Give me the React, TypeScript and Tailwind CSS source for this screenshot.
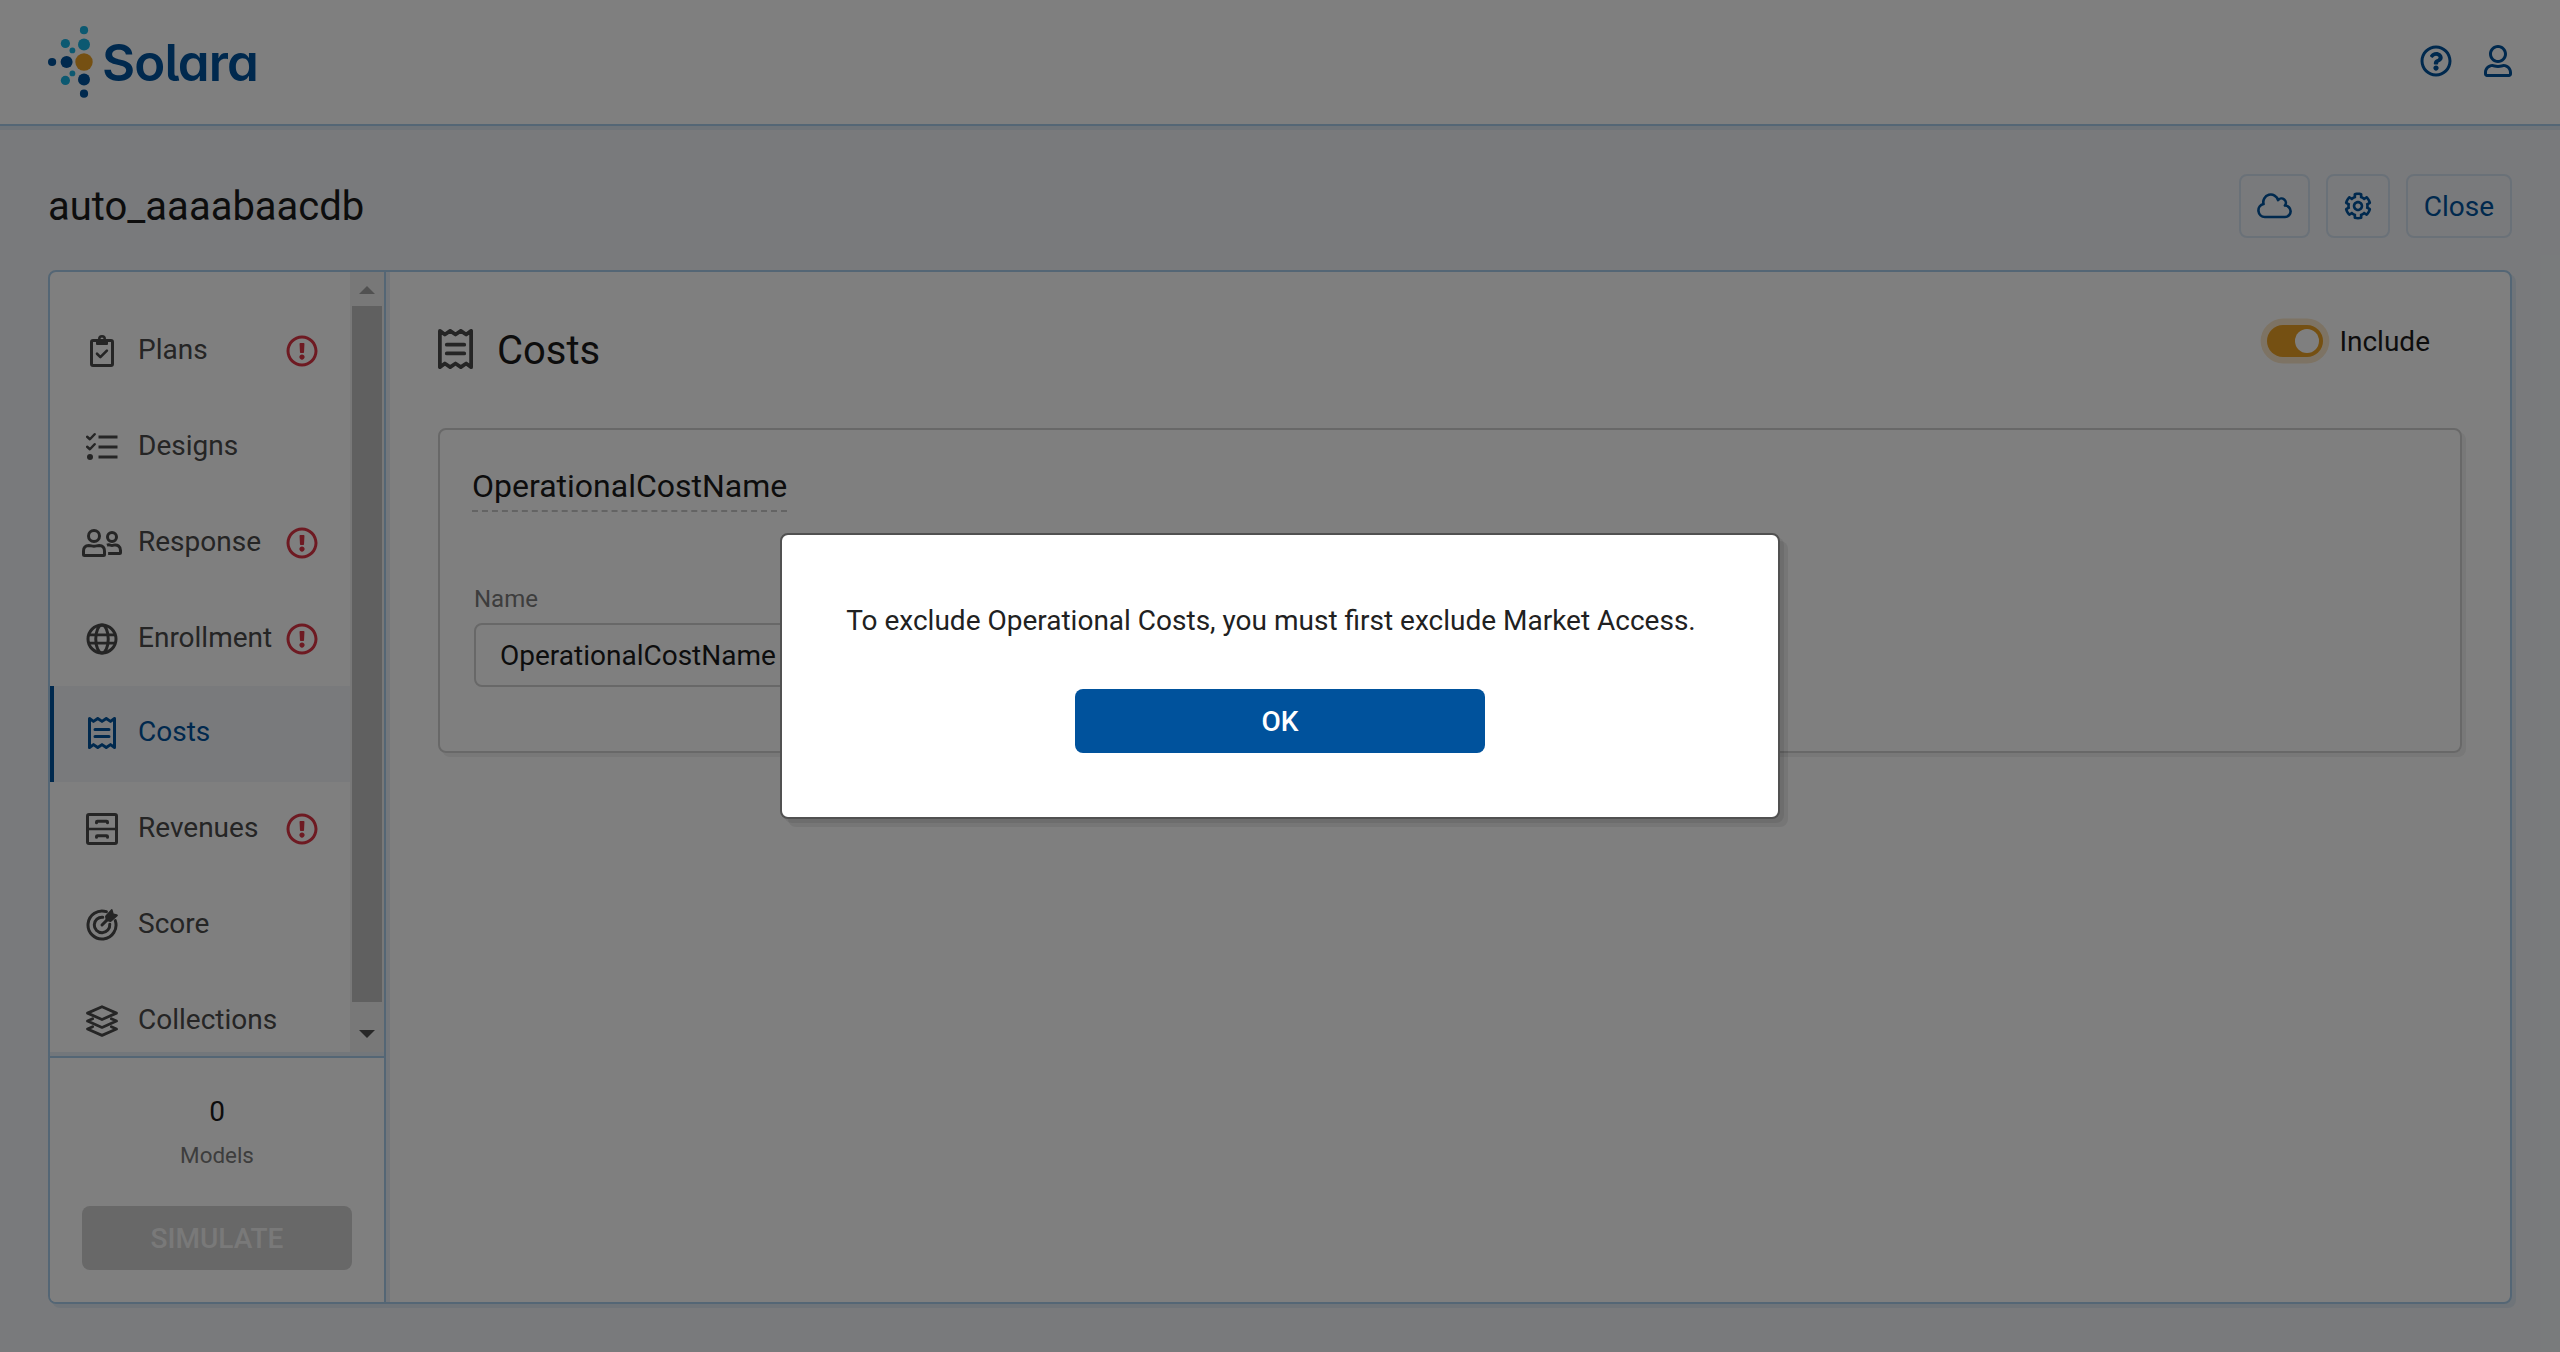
import type { ReactNode } from "react";
import { FaRegQuestionCircle, FaRegUser } from "react-icons/fa";

type IconProps = { className?: string };

function Icon({ w = 512, className = "", children }: { w?: number; className?: string; children: ReactNode }) {
  return (
    <svg
      viewBox={`0 0 ${w} 512`}
      className={className}
      fill="none"
      stroke="currentColor"
      strokeWidth={48}
      strokeLinejoin="round"
      strokeLinecap="round"
    >
      {children}
    </svg>
  );
}

const PlansIcon = ({ className }: IconProps) => (
  <Icon w={384} className={className}>
    <rect x="24" y="88" width="336" height="400" rx="24" />
    <path
      d="M192 0a64 64 0 0 1 64 64h16a16 16 0 0 1 16 16v64a16 16 0 0 1-16 16H112a16 16 0 0 1-16-16V80a16 16 0 0 1 16-16h16a64 64 0 0 1 64-64zm0 40a24 24 0 1 0 0 48 24 24 0 0 0 0-48z"
      fill="currentColor"
      stroke="none"
    />
    <path d="M112 300l54 54 104-104" strokeWidth="42" />
  </Icon>
);

const DesignsIcon = ({ className }: IconProps) => (
  <Icon className={className}>
    <path d="M200 96h304M200 256h304M200 416h304" strokeWidth="46" strokeLinecap="butt" />
    <path d="M18 92l44 40 76-80M18 252l44 40 76-80" strokeWidth="40" />
    <circle cx="64" cy="416" r="48" fill="currentColor" stroke="none" />
  </Icon>
);

const ResponseIcon = ({ className }: IconProps) => (
  <Icon w={640} className={className}>
    <circle cx="192" cy="144" r="88" />
    <path d="M110 296c30 0 50 12 82 12s52-12 82-12q86 4 86 89v55q0 16-16 16H40q-16 0-16-16v-55q0-85 86-89z" />
    <circle cx="480" cy="160" r="72" />
    <path d="M400 292c14-6 40-8 52-2 20 6 36 6 56 0 60-14 108 24 108 84v34q0 16-16 16H418" strokeLinecap="butt" />
  </Icon>
);

const EnrollmentIcon = ({ className }: IconProps) => (
  <Icon className={className}>
    <circle cx="256" cy="256" r="224" />
    <ellipse cx="256" cy="256" rx="100" ry="224" />
    <path d="M40 190h432M40 322h432" strokeLinecap="butt" strokeWidth="44" />
  </Icon>
);

const CostsIcon = ({ className }: IconProps) => (
  <Icon w={448} className={className}>
    <path d="M24 24l64 46 68-46 68 46 68-46 68 46 64-46v464l-64-46-68 46-68-46-68 46-68-46-64 46z" />
    <path d="M112 200h224M112 312h224" />
  </Icon>
);

const RevenuesIcon = ({ className }: IconProps) => (
  <Icon className={className}>
    <rect x="24" y="24" width="464" height="464" rx="24" />
    <path d="M24 256h464" strokeWidth="42" />
    <path d="M168 156v-12q0-14 14-14h148q14 0 14 14v12M168 388v-12q0-14 14-14h148q14 0 14 14v12" />
  </Icon>
);

const ScoreIcon = ({ className }: IconProps) => (
  <Icon className={className}>
    <path d="M326 43A224 224 0 1 0 469 186" />
    <path d="M268 132A124 124 0 1 0 380 244" />
    <path d="M256 256l110-110" />
    <path
      d="M318 188l-12-62a24 24 0 0 1 6-22l84-94c12-14 28-10 32 8l14 52 52 14c18 4 22 20 8 32l-94 84a24 24 0 0 1-22 6z"
      fill="currentColor"
      stroke="none"
    />
  </Icon>
);

const CollectionsIcon = ({ className }: IconProps) => (
  <Icon className={className}>
    <path d="M24 130L256 28l232 102-232 102zM106 220l-82 37 232 102 232-102-82-37M106 347l-82 37 232 102 232-102-82-37" strokeWidth="44" />
  </Icon>
);

const CloudIcon = ({ className }: IconProps) => (
  <Icon w={640} className={className}>
    <path d="M144 456a120 120 0 0 1-24-237A136 136 0 0 1 385 148 72 72 0 0 1 510 248 104 104 0 0 1 512 456z" />
  </Icon>
);

const GearIcon = ({ className }: IconProps) => (
  <svg viewBox="0 0 512 512" className={className} fill="currentColor">
    <path d="M452.515 237l31.843-18.382c9.426-5.441 13.996-16.542 11.177-27.054-11.404-42.531-33.842-80.547-64.058-110.797-7.68-7.688-19.575-9.246-28.985-3.811l-31.785 18.358a196.276 196.276 0 0 0-32.899-19.02V39.541a24.016 24.016 0 0 0-17.842-23.206c-41.761-11.107-86.117-11.121-127.93-.001-10.519 2.798-17.844 12.321-17.844 23.206v36.753a196.276 196.276 0 0 0-32.899 19.02l-31.784-18.358c-9.41-5.435-21.305-3.877-28.985 3.811-30.216 30.25-52.654 68.265-64.058 110.797-2.819 10.512 1.751 21.613 11.177 27.054L59.485 237a197.715 197.715 0 0 0 0 37.999l-31.843 18.382c-9.426 5.441-13.996 16.542-11.177 27.054 11.404 42.531 33.842 80.547 64.058 110.797 7.68 7.688 19.575 9.246 28.985 3.811l31.785-18.358a196.202 196.202 0 0 0 32.899 19.019v36.753a24.016 24.016 0 0 0 17.842 23.206c41.761 11.107 86.117 11.122 127.93.001 10.519-2.798 17.844-12.321 17.844-23.206v-36.753a196.34 196.34 0 0 0 32.899-19.019l31.785 18.358c9.41 5.435 21.305 3.877 28.985-3.811 30.216-30.25 52.654-68.266 64.058-110.797 2.819-10.512-1.751-21.613-11.177-27.054L452.515 275c1.22-12.65 1.22-25.35 0-38zm-52.679 63.019l43.819 25.289a200.138 200.138 0 0 1-33.849 58.528l-43.829-25.309c-31.984 27.397-36.659 30.077-76.168 44.029v50.599a200.917 200.917 0 0 1-67.618 0v-50.599c-39.504-13.95-44.196-16.642-76.168-44.029l-43.829 25.309a200.15 200.15 0 0 1-33.849-58.528l43.819-25.289c-7.63-41.299-7.634-46.719 0-88.038l-43.819-25.289c7.85-21.229 19.31-41.049 33.849-58.529l43.829 25.309c31.984-27.397 36.66-30.078 76.168-44.029V58.845a200.917 200.917 0 0 1 67.618 0v50.599c39.504 13.95 44.196 16.642 76.168 44.029l43.829-25.309a200.143 200.143 0 0 1 33.849 58.529l-43.819 25.289c7.631 41.3 7.634 46.718 0 88.037zM256 160c-52.935 0-96 43.065-96 96s43.065 96 96 96 96-43.065 96-96-43.065-96-96-96zm0 144c-26.468 0-48-21.532-48-48 0-26.467 21.532-48 48-48s48 21.533 48 48c0 26.468-21.532 48-48 48z" />
  </svg>
);

const AlertIcon = ({ className }: IconProps) => (
  <svg viewBox="0 0 512 512" className={className} fill="currentColor">
    <path d="M256 8C119.043 8 8 119.083 8 256c0 136.997 111.043 248 248 248s248-111.003 248-248C504 119.083 392.957 8 256 8zm0 448c-110.532 0-200-89.431-200-200 0-110.495 89.472-200 200-200 110.491 0 200 89.471 200 200 0 110.53-89.431 200-200 200zm42-104c0 23.159-18.841 42-42 42s-42-18.841-42-42 18.841-42 42-42 42 18.841 42 42zm-81.37-211.401l6.8 136c.319 6.387 5.591 11.401 11.985 11.401h41.17c6.394 0 11.666-5.014 11.985-11.401l6.8-136c.343-6.854-5.122-12.599-11.985-12.599h-54.77c-6.863 0-12.328 5.745-11.985 12.599z" />
  </svg>
);

function Logo() {
  return (
    <div className="flex h-[72px] items-start">
      <svg viewBox="0 0 45 72" className="h-[72px] w-[45px]">
        <g fill="#18b2e2">
          <circle cx="36" cy="4.2" r="4.1" />
          <circle cx="17.4" cy="17.5" r="4.6" />
          <circle cx="36" cy="18.5" r="6" />
          <circle cx="24.4" cy="24.4" r="2.9" />
          <circle cx="24.4" cy="47.4" r="2.9" />
          <circle cx="17.4" cy="54.4" r="4.6" />
        </g>
        <g fill="#00529c">
          <circle cx="4.1" cy="36" r="4.1" />
          <circle cx="18.6" cy="36" r="6" />
          <circle cx="36" cy="53.5" r="6" />
          <circle cx="36" cy="67.7" r="4.1" />
        </g>
        <circle cx="36" cy="36" r="8.7" fill="#eba024" />
      </svg>
      <span className="ml-[9px] mt-[11px] font-[Inter,sans-serif] text-[51px] leading-[51px] font-semibold tracking-[-0.9px] text-[#00529c] [font-feature-settings:'cv11','cv05']">
        Solara
      </span>
    </div>
  );
}

type NavItem = { label: string; icon: (p: IconProps) => ReactNode; size: string; alert?: boolean; active?: boolean; row: string };

const navItems: NavItem[] = [
  { label: "Plans", icon: PlansIcon, size: "w-6", alert: true, row: "h-24 pt-8" },
  { label: "Designs", icon: DesignsIcon, size: "w-8", row: "h-24 pt-8" },
  { label: "Response", icon: ResponseIcon, size: "w-10", alert: true, row: "h-24 pt-8" },
  { label: "Enrollment", icon: EnrollmentIcon, size: "w-8", alert: true, row: "h-[95px] pt-8" },
  { label: "Costs", icon: CostsIcon, size: "w-7", active: true, row: "h-24 pt-[31px]" },
  { label: "Revenues", icon: RevenuesIcon, size: "w-8", alert: true, row: "h-24 pt-[31px]" },
  { label: "Score", icon: ScoreIcon, size: "w-8", row: "h-24 pt-[31px]" },
  { label: "Collections", icon: CollectionsIcon, size: "w-8", row: "h-24 pt-[31px]" },
];

function NavRow({ item }: { item: NavItem }) {
  const Glyph = item.icon;
  const tone = item.active
    ? "border-[#00529c] bg-[#f2f5f9] text-[#00529c]"
    : "border-transparent text-[#4a4a4a]";
  return (
    <div className={`flex shrink-0 items-start border-l-4 pl-7 ${item.row} ${tone}`}>
      <div className="flex w-10 justify-center">
        <Glyph className={`h-8 ${item.size}`} />
      </div>
      <div className="-mt-px ml-4 w-[148px] leading-8">{item.label}</div>
      {item.alert && <AlertIcon className="size-8 text-[#dc3545]" />}
    </div>
  );
}

function Scrollbar() {
  return (
    <div className="flex w-[34px] flex-col items-center bg-[#f1f1f1]">
      <div className="mt-[14px] h-2 w-4 bg-[#a3a3a3] [clip-path:polygon(50%_0,100%_100%,0_100%)]" />
      <div className="mt-3 h-[696px] w-[30px] bg-[#c1c1c1]" />
      <div className="mt-7 h-2 w-4 bg-[#505050] [clip-path:polygon(0_0,100%_0,50%_100%)]" />
    </div>
  );
}

const toolButton = "flex h-16 items-center rounded-lg border-2 border-[#d5e2f0] px-4 text-[#00529c]";

export default function App() {
  return (
    <div className="relative flex h-[1352px] w-[2560px] flex-col overflow-hidden bg-[#f2f5f8] font-[Roboto,sans-serif] text-[28px] text-[#1b1b1b]">
      <header className="flex h-[126px] shrink-0 items-start justify-between border-b-2 border-[#a9cdea] bg-white pr-12 pl-12 shadow-[0_4px_0_#dfe9f2]">
        <div className="pt-[26px]">
          <Logo />
        </div>
        <div className="flex gap-8 pt-[45px] text-[#00529c]">
          <FaRegQuestionCircle className="size-8" />
          <FaRegUser className="h-8 w-7" />
        </div>
      </header>

      <div className="flex h-[144px] shrink-0 items-start justify-between px-12 pt-12">
        <h1 className="pt-[9px] text-[40px] leading-[48px]">auto_aaaabaacdb</h1>
        <div className="flex gap-4">
          <button className={toolButton}>
            <CloudIcon className="h-7 w-[35px]" />
          </button>
          <button className={toolButton}>
            <GearIcon className="size-7" />
          </button>
          <button className={toolButton}>
            <span className="pt-[2px]">Close</span>
          </button>
        </div>
      </div>

      <main className="mx-12 flex h-[1034px] shrink-0 rounded-lg border-2 border-[#a9cdea] bg-white shadow-[4px_4px_0_#dfe9f2]">
        <aside className="z-10 flex w-[336px] shrink-0 flex-col border-r-2 border-[#a9cdea] shadow-[4px_0_0_#e8eff6]">
          <div className="flex h-[784px] overflow-hidden">
            <nav className="flex flex-1 flex-col pt-[31px]">
              {navItems.map((item) => (
                <NavRow key={item.label} item={item} />
              ))}
            </nav>
            <Scrollbar />
          </div>
          <section className="flex flex-1 flex-col items-center rounded-bl-md border-t-2 border-[#a9cdea] bg-white shadow-[0_-4px_0_#e6eef6]">
            <div className="mt-9 leading-9">0</div>
            <div className="mt-[9px] text-[22.4px] leading-8 text-[#7a7a7a]">Models</div>
            <button className="mt-[35px] h-16 w-[270px] rounded-lg bg-[#d0d0d0] pt-[2px] font-medium text-white/75">
              SIMULATE
            </button>
          </section>
        </aside>

        <section className="flex-1 pr-12 pl-[52px]">
          <div className="flex h-[156px] items-start justify-between">
            <div className="flex pt-[57px]">
              <CostsIcon className="h-10 w-[35px] text-[#4a4a4a]" />
              <h2 className="-mt-px ml-6 text-[40px] leading-[46px]">Costs</h2>
            </div>
            <div className="flex items-start pt-[53px] pr-[32px]">
              <div className="flex h-8 w-14 items-center justify-end rounded-full bg-[#eba024] pr-1 shadow-[0_0_0_6.4px_#fbe7c8]">
                <div className="size-6 rounded-full bg-white" />
              </div>
              <span className="ml-4 leading-[34px]">Include</span>
            </div>
          </div>
          <div className="h-[325px] rounded-lg border-2 border-[#d0d0d0] px-8 pt-10 shadow-[4px_4px_0_#f0f0f0]">
            <h3 className="flex h-[42px] w-fit border-b-2 border-dashed border-[#c8c8c8] text-[32px] leading-[32px]">
              OperationalCostName
            </h3>
            <div className="mt-[71px] ml-[2px] text-[24px] leading-8 text-[#7a7a7a]">Name</div>
            <div className="mt-2 ml-[2px] flex h-16 w-[600px] items-center rounded-lg border-2 border-[#d0d0d0] px-6 pt-[2px]">
              OperationalCostName
            </div>
          </div>
        </section>
      </main>

      <div className="absolute inset-0 z-20 flex items-center justify-center bg-black/50">
        <div
          role="dialog"
          className="flex h-[286px] w-[1000px] flex-col items-center rounded-lg border-2 border-[#515151] bg-white pt-[66px] shadow-[4px_4px_0_rgba(0,0,0,0.07),8px_8px_0_rgba(0,0,0,0.07)]"
        >
          <p className="mr-[18px] leading-10 text-[#212121]">
            To exclude Operational Costs, you must first exclude Market Access.
          </p>
          <button className="mt-[48px] h-16 w-[410px] rounded-lg bg-[#00529c] pt-[2px] font-medium text-white">OK</button>
        </div>
      </div>
    </div>
  );
}
